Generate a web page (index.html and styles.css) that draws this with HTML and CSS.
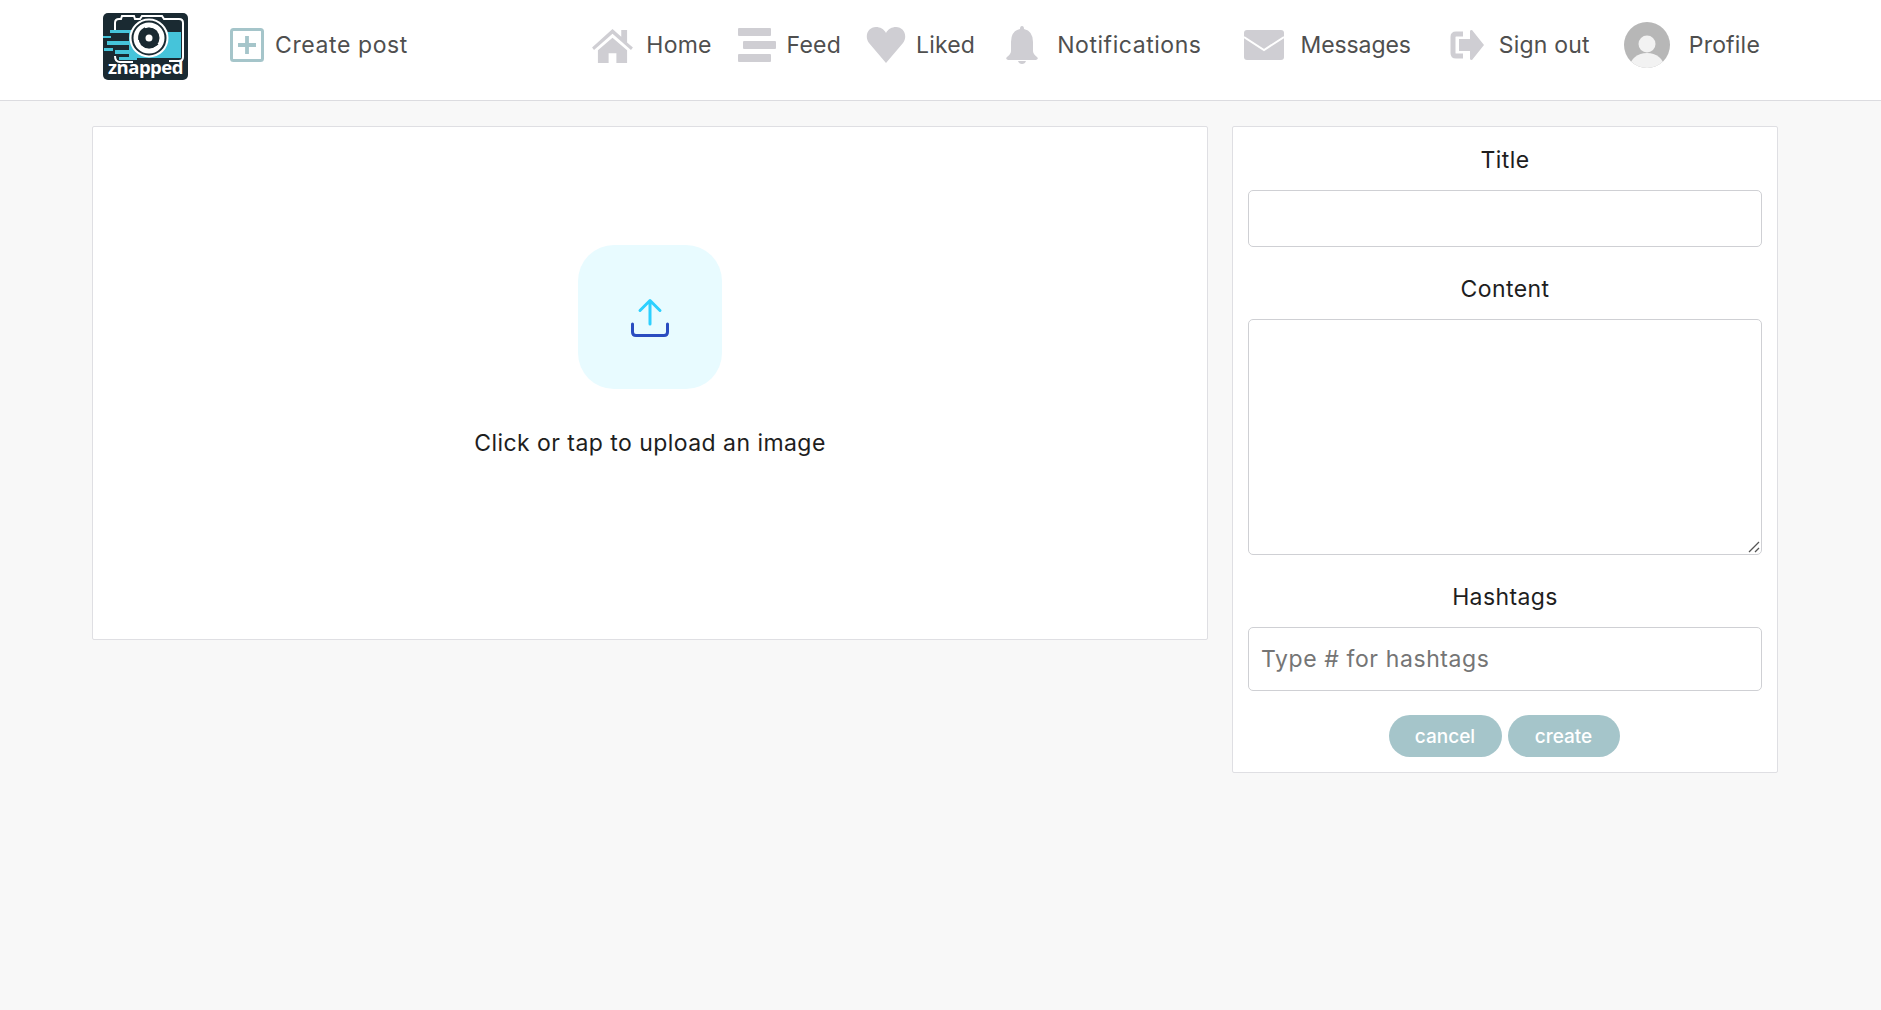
FILE: index.html
```html
<!DOCTYPE html>
<html lang="en">
<head>
    <meta charset="UTF-8">
    <meta name="viewport" content="width=device-width, initial-scale=1.0">
    <title>Create post</title>
    <link rel="stylesheet" href="styles.css">
</head>
<body>
    <header class="topbar">
        <svg class="logo" viewBox="0 0 85 67" aria-label="znapped logo">
            <rect width="85" height="67" rx="5" fill="#1a2a32"/>
            <path d="M26 19h52v26H26z" fill="#45c4da"/>
            <path d="M7 17h22v3H7zM0 23h8v2H0zM4 28h26v4H4zM1 35h9v3H1zM12 37h18v4H12zM16 44h18v3H16z" fill="#45c4da"/>
            <path d="M12 17v-7q0-4 4-4h2l1-3h12l1 3h5l2-3h20l2 3h15q4 0 4 4v34q0 4-4 4H66M12 43q0 6 5 6h13" fill="none" stroke="#fff" stroke-width="2"/>
            <circle cx="46" cy="25" r="18.500" fill="#1a2a32" stroke="#fff" stroke-width="2"/>
            <circle cx="46" cy="25" r="13" fill="none" stroke="#fff" stroke-width="5"/>
            <path d="M37 19q9-7 17 0M55 31q-9 7-17 0M36 27q-1-8 6-12" fill="none" stroke="#1a2a32" stroke-width="1.500"/>
            <circle cx="46" cy="25" r="6" fill="#1a2a32"/>
            <circle cx="46" cy="25" r="3.500" fill="#fff"/>
            <text class="logo-text" x="42.500" y="61" text-anchor="middle">znapped</text>
        </svg>

        <a class="nav-link create-link">
            <svg class="icon" width="34" height="34" viewBox="0 0 34 34">
                <rect x="1.500" y="1.500" width="31" height="31" rx="2" fill="#fff" stroke="#a5c5ca" stroke-width="3"/>
                <path d="M17 8v18M8 17h18" stroke="#a5c5ca" stroke-width="3.800"/>
            </svg>
            Create post
        </a>

        <nav class="nav">
            <a class="nav-link home-link">
                <svg class="icon" width="43" height="35" viewBox="0 0 44 36">
                    <path d="M1 20 22 1l9 8V2h6v13l6 5-2 2.500L22 6 3 22.500z" fill="#cfced3"/>
                    <path d="M7 23 22 10l15 13v13H26V26h-8v10H7z" fill="#cfced3"/>
                </svg>
                Home
            </a>
            <a class="nav-link feed-link">
                <svg class="icon" width="38" height="36" viewBox="0 0 38 36">
                    <rect x="0" y="1" width="33" height="8" rx="1" fill="#cfced3"/>
                    <rect x="5" y="14" width="33" height="8" rx="1" fill="#cfced3"/>
                    <rect x="0" y="27" width="33" height="8" rx="1" fill="#cfced3"/>
                </svg>
                Feed
            </a>
            <a class="nav-link liked-link">
                <svg class="icon" width="40" height="36" viewBox="0 0 40 36">
                    <path d="M20 36 3 16C-2 9 2 0 10 0c4 0 8 2 10 6 2-4 6-6 10-6 8 0 12 9 7 16z" fill="#cfced3"/>
                </svg>
                Liked
            </a>
            <a class="nav-link bell-link">
                <svg class="icon" width="34" height="38" viewBox="0 0 34 38">
                    <path d="M15 3q0-3 2-3t2 3q9 2 9 13v9q0 3 4 6 2 2-1 3H3q-3-1-1-3 4-3 4-6v-9Q6 5 15 3z" fill="#cfced3"/>
                    <path d="M13 35h8q-1 3-4 3t-4-3z" fill="#cfced3"/>
                </svg>
                Notifications
            </a>
            <a class="nav-link messages-link">
                <svg class="icon" width="40" height="30" viewBox="0 0 40 30">
                    <rect width="40" height="30" rx="3" fill="#cfced3"/>
                    <path d="M0 7l20 13L40 7" fill="none" stroke="#fff" stroke-width="2"/>
                </svg>
                Messages
            </a>
            <a class="nav-link signout-link">
                <svg class="icon" width="34" height="30" viewBox="0 0 34 30">
                    <path d="M13 4H6q-3 0-3 3v16q0 3 3 3h7" fill="none" stroke="#cfced3" stroke-width="5"/>
                    <path d="M9 9h11V1q0-1 2-1l12 15-12 15q-2 0-2-1v-8H9z" fill="#cfced3"/>
                </svg>
                Sign out
            </a>
            <a class="nav-link profile-link">
                <svg class="avatar" width="46" height="46" viewBox="0 0 46 46">
                    <clipPath id="avatar-clip"><circle cx="23" cy="23" r="23"/></clipPath>
                    <g clip-path="url(#avatar-clip)">
                        <rect width="46" height="46" fill="#b7b7b7"/>
                        <circle cx="23" cy="22" r="8.500" fill="#f2f2f2"/>
                        <ellipse cx="23" cy="45" rx="17" ry="14" fill="#f2f2f2"/>
                    </g>
                </svg>
                Profile
            </a>
        </nav>
    </header>

    <main class="page">
        <section class="card upload-card">
            <div class="upload-box">
                <svg width="42" height="42" viewBox="0 0 42 42">
                    <path d="M21 27V3.500M11 13.500 21 3.500l10 10" fill="none" stroke="#2dd0ff" stroke-width="3" stroke-linecap="round" stroke-linejoin="round"/>
                    <path d="M3.500 27v8q0 3.500 3.500 3.500h28q3.500 0 3.500-3.500v-8" fill="none" stroke="#2a4cc0" stroke-width="3" stroke-linecap="round"/>
                </svg>
            </div>
            <p class="upload-text">Click or tap to upload an image</p>
        </section>

        <form class="card post-form">
            <label class="field-label">Title</label>
            <input class="text-input title-input" type="text">
            <label class="field-label">Content</label>
            <div class="textarea-wrap">
                <textarea class="text-input content-input"></textarea>
                <svg class="resize-handle" width="12" height="12" viewBox="0 0 12 12">
                    <path d="M1 11 11 1M7 11l4-4" stroke="#555" stroke-width="1.300"/>
                </svg>
            </div>
            <label class="field-label">Hashtags</label>
            <input class="text-input hashtag-input" type="text" placeholder="Type # for hashtags">
            <div class="actions">
                <button class="btn cancel-btn" type="button">cancel</button>
                <button class="btn create-btn" type="button">create</button>
            </div>
        </form>
    </main>
</body>
</html>
```

FILE: styles.css
```css
* {
    box-sizing: border-box;
}

body {
    margin: 0;
    min-height: 1010px;
    background-color: #f8f8f8;
    color: #1e1e1e;
    font-family: Inter, "Noto Sans", sans-serif;
}

.topbar {
    display: flex;
    align-items: center;
    height: 101px;
    padding: 0 121px 0 103px;
    background: #fff;
    border-bottom: 1px solid #dcdce0;
}

.logo {
    display: block;
    width: 85px;
    height: 67px;
    margin-top: -7px;
}

.logo-text {
    fill: #fff;
    font-family: "Open Sans", sans-serif;
    font-size: 18.500px;
    font-weight: 700;
    letter-spacing: -0.500px;
}

.nav {
    display: flex;
    align-items: center;
    margin-left: auto;
}

.nav-link {
    display: flex;
    align-items: center;
    margin-top: -10px;
    color: #4f4f4f;
    font-size: 23px;
    letter-spacing: 0.200px;
    white-space: nowrap;
}

.create-link {
    gap: 11px;
    margin-left: 42px;
    letter-spacing: 0.600px;
}

.home-link { gap: 12px; }
.feed-link { gap: 11px; margin-left: 26px; }
.liked-link { gap: 10px; margin-left: 25px; }
.bell-link { gap: 18px; margin-left: 30px; letter-spacing: 0.550px; }
.messages-link { gap: 17px; margin-left: 42px; letter-spacing: -0.100px; }
.signout-link { gap: 15px; margin-left: 39px; }
.profile-link { gap: 19px; margin-left: 34px; }

.page {
    display: flex;
    align-items: flex-start;
    gap: 24px;
    padding: 25px 103px 0 92px;
}

.card {
    background: #fff;
    border: 1px solid #dfdfe3;
    border-radius: 2px;
}

.upload-card {
    display: flex;
    flex-direction: column;
    align-items: center;
    width: 1116px;
    height: 514px;
    padding-top: 118px;
}

.upload-box {
    display: flex;
    align-items: center;
    justify-content: center;
    width: 144px;
    height: 144px;
    padding-top: 2px;
    background: #e8fbff;
    border-radius: 36px;
}

.upload-text {
    margin: 40px 0 0;
    font-size: 23px;
    line-height: 28px;
    letter-spacing: 0.450px;
}

.post-form {
    display: flex;
    flex-direction: column;
    width: 546px;
    height: 647px;
    padding: 18px 15px 0;
}

.field-label {
    display: block;
    height: 30px;
    margin-bottom: 15px;
    font-size: 23px;
    line-height: 30px;
    letter-spacing: 0.400px;
    text-align: center;
}

.text-input {
    display: block;
    width: 100%;
    background: #fff;
    border: 1px solid #cfd0d4;
    border-radius: 5px;
    font-family: inherit;
    font-size: 23px;
    color: #333;
    outline: none;
}

.title-input {
    height: 57px;
    margin-bottom: 27px;
}

.textarea-wrap {
    position: relative;
    margin-bottom: 27px;
}

.content-input {
    height: 236px;
    resize: none;
}

.resize-handle {
    position: absolute;
    right: 2px;
    bottom: 2px;
}

.hashtag-input {
    height: 64px;
    padding: 0 12px;
    letter-spacing: 0.600px;
}

.hashtag-input::placeholder {
    color: #757575;
}

.actions {
    display: flex;
    justify-content: center;
    gap: 6px;
    margin-top: 24px;
    padding-right: 2px;
}

.btn {
    height: 42px;
    border: none;
    border-radius: 21px;
    background: #a5c5ca;
    color: #fff;
    font-family: inherit;
    font-size: 19px;
    font-weight: 500;
}

.cancel-btn { width: 113px; }
.create-btn { width: 112px; }
```
